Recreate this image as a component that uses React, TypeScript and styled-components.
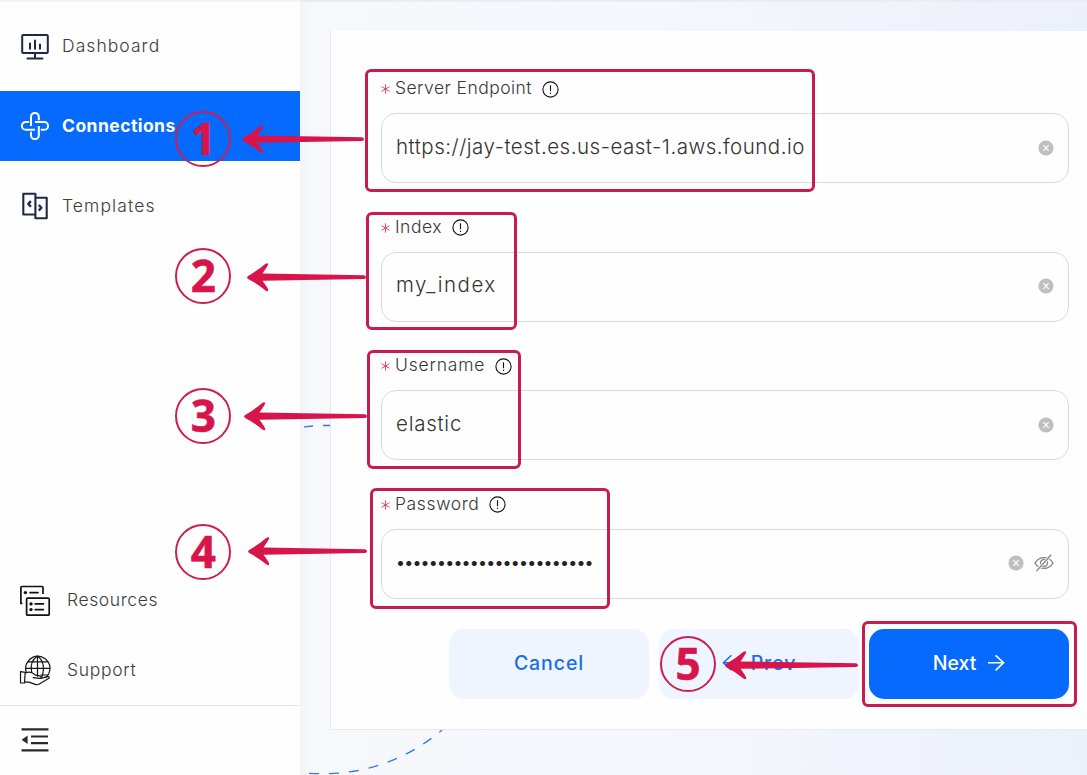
import React from "react";
import styled, { createGlobalStyle } from "styled-components";

const GlobalStyle = createGlobalStyle`
  *, *::before, *::after { box-sizing: border-box; }
  html, body { margin: 0; padding: 0; }
  body {
    width: 1087px;
    height: 775px;
    overflow: hidden;
    background: #fff;
    font-family: Inter, "Liberation Sans", sans-serif;
    color: #3d3d3d;
  }
`;

const Page = styled.div`
  position: relative;
  display: flex;
  width: 1087px;
  height: 775px;
  overflow: hidden;
`;

const Sidebar = styled.aside`
  width: 300px;
  flex: none;
  display: flex;
  flex-direction: column;
  background: #fefefe;
  border-top: 2px solid #f3f3f4;
`;

const NavGroup = styled.nav`
  display: flex;
  flex-direction: column;
  gap: 10px;
  padding-top: 9px;
`;

const FooterGroup = styled.nav`
  display: flex;
  flex-direction: column;
  margin-top: auto;
`;

const NavItem = styled.a<{ $active?: boolean; $left?: number; $gap?: number }>`
  display: flex;
  align-items: center;
  height: 70px;
  padding-left: ${(p) => p.$left ?? 21}px;
  gap: ${(p) => p.$gap ?? 13}px;
  background: ${(p) => (p.$active ? "#066aff" : "transparent")};
  color: ${(p) => (p.$active ? "#fff" : "#3c3c3c")};

  svg { flex: none; }
`;

const NavText = styled.span<{ $spacing: number; $bold?: boolean }>`
  font-size: 17.5px;
  line-height: 24px;
  font-weight: ${(p) => (p.$bold ? 650 : 300)};
  letter-spacing: ${(p) => p.$spacing}px;
  white-space: nowrap;
`;

const CollapseBar = styled.div`
  height: 70px;
  display: flex;
  align-items: center;
  padding: 0 0 2px 21px;
  border-top: 1px solid #e6e6e6;
`;

const Main = styled.main`
  position: relative;
  flex: 1;
  min-width: 0;
  padding: 29px 0 0 30px;
  border-top: 2px solid #eaecef;
  background: linear-gradient(90deg, #f3f4f7 0, #f6f8fb 14px, #f4f7fc 45%, #ecf0fb 100%);
`;

const Backdrop = styled.svg`
  position: absolute;
  left: 0;
  top: -2px;
`;

const Card = styled.section`
  position: relative;
  height: 699px;
  padding: 45px 18px 0 50px;
  background: #fefefe;
  border-left: 1px solid #e4e8ee;
  border-bottom: 1px solid #e6e9f0;
`;

const Field = styled.div`
  height: 138.67px;
`;

const Label = styled.label`
  display: flex;
  align-items: center;
  height: 24px;
  color: #383838;
`;

const Star = styled.svg`
  margin: 2px 5px 0 0;
  flex: none;
`;

const LabelText = styled.span<{ $spacing: number }>`
  font-size: 17.5px;
  line-height: 24px;
  font-weight: 300;
  letter-spacing: ${(p) => p.$spacing}px;
  white-space: nowrap;
`;

const InfoSvg = styled.svg`
  margin: 2px 0 0 10px;
  flex: none;
`;

const InputBox = styled.div`
  display: flex;
  align-items: center;
  justify-content: space-between;
  height: 70px;
  margin-top: 13px;
  padding: 0 14px 1px;
  border: 1px solid #d8dadb;
  border-radius: 15px;
`;

const Value = styled.span<{ $spacing: number; $dots?: boolean }>`
  font-size: ${(p) => (p.$dots ? 16 : 20.5)}px;
  line-height: 30px;
  margin-bottom: 2px;
  font-weight: ${(p) => (p.$dots ? 400 : 300)};
  letter-spacing: ${(p) => p.$spacing}px;
  color: ${(p) => (p.$dots ? "#222" : "#333")};
  white-space: nowrap;
`;

const Suffix = styled.span`
  display: flex;
  align-items: center;
  gap: 10px;
`;

const Actions = styled.div`
  display: flex;
  justify-content: flex-end;
  gap: 10px;
  margin-top: -2px;
`;

const Button = styled.button<{ $primary?: boolean }>`
  display: flex;
  align-items: center;
  justify-content: center;
  gap: 11px;
  width: 200px;
  height: 70px;
  padding: 0 0 2px;
  border: 0;
  border-radius: 15px;
  font: 500 19.5px/28px Inter, "Liberation Sans", sans-serif;
  letter-spacing: ${(p) => (p.$primary ? 0 : 0.9)}px;
  background: ${(p) => (p.$primary ? "#066aff" : "#eef5fe")};
  color: ${(p) => (p.$primary ? "#fff" : "#176fe8")};

  svg { margin-top: 2px; }
`;

const Annotations = styled.div`
  position: absolute;
  inset: 0;
  pointer-events: none;
`;

const Frame = styled.div<{ $x: number; $y: number; $w: number; $h: number }>`
  position: absolute;
  left: ${(p) => p.$x}px;
  top: ${(p) => p.$y}px;
  width: ${(p) => p.$w}px;
  height: ${(p) => p.$h}px;
  border: 3px solid #c61c4f;
  border-radius: 6px;
`;

const Step = styled.div<{ $x: number; $y: number }>`
  position: absolute;
  left: ${(p) => p.$x - 28}px;
  top: ${(p) => p.$y - 28}px;
  width: 56px;
  height: 56px;
  border: 2px solid #c9204f;
  border-radius: 50%;
  display: flex;
  align-items: center;
  justify-content: center;
  padding-bottom: 2px;
  font: 700 44px/50px "Open Sans", "Noto Sans", sans-serif;
  -webkit-text-stroke: 0.6px #d8154a;
  color: #d8154a;
`;

const ArrowSvg = styled.svg<{ $x: number; $y: number }>`
  position: absolute;
  left: ${(p) => p.$x}px;
  top: ${(p) => p.$y - 16}px;
`;

const Arrow = ({ x, y, end }: { x: number; y: number; end: number }) => {
  const w = end - x;
  return (
    <ArrowSvg $x={x} $y={y} width={w} height={32} viewBox={`0 0 ${w} 32`}>
      <path
        d={`M0 16.4 L1 15 Q10 10 18.5 2.7 Q20.5 1.6 21.3 3 Q21.6 4 15.5 12.4 L${w - 2} 14.2 Q${w} 14.5 ${w} 16.2 Q${w} 17.8 ${w - 2} 18 L15.5 19.8 Q21.6 28 21.3 29.4 Q20.4 30.8 18.5 29.6 Q10 22.5 1 18 Z`}
        fill="#d8154a"
      />
    </ArrowSvg>
  );
};

const DashboardIcon = () => (
  <svg width="28" height="28" viewBox="0 0 28 28" fill="none" stroke="#1c2a47" strokeWidth="2" strokeLinecap="round" strokeLinejoin="round">
    <rect x="1.2" y="3" width="25.6" height="18" rx="1" />
    <path d="M14 21v4.5M6.5 26.6h15" />
    <path d="M9 11.5v5.2M14 8.5v8.2M19 12.5v4.2" />
  </svg>
);

const ConnectionsIcon = () => (
  <svg width="28" height="28" viewBox="0 0 28 28" fill="none" stroke="#fff" strokeWidth="2" strokeLinejoin="round">
    <path d="M14 17.8H4.8a3.9 3.9 0 0 1 0-7.8h3.4" />
    <path d="M10 14V4.8a3.9 3.9 0 0 1 7.8 0v3.4" />
    <path d="M14 10h9.2a3.9 3.9 0 0 1 0 7.8h-3.4" />
    <path d="M17.8 14v9.2a3.9 3.9 0 0 1-7.8 0v-3.4" />
  </svg>
);

const TemplatesIcon = () => (
  <svg width="28" height="28" viewBox="0 0 28 28" fill="none" stroke="#1c2a47" strokeWidth="2.1" strokeLinejoin="round">
    <path d="M14.4 22.5H2.3V1.8h12.1v24.5h11.3V5.7H14.4" />
    <path d="M9.9 9.1 7.3 11.9l2.6 2.8M17.8 13l2.6 2.8-2.6 2.8" strokeWidth="2.3" />
  </svg>
);

const ResourcesIcon = () => (
  <svg width="32" height="32" viewBox="0 0 32 32" fill="none" stroke="#111" strokeWidth="1.7" strokeLinejoin="round">
    <path d="M3.4 19.5H1.9V3.5a1 1 0 0 1 1-1H23a1 1 0 0 1 1 1V10" />
    <rect x="7.6" y="14.2" width="22.6" height="17" rx="1" />
    <path d="M11 8.6h8M16.2 19.9h8.2M16.2 25.6h8.2" strokeLinecap="round" />
    <g fill="#111" stroke="none">
      <circle cx="6.4" cy="8.6" r="1.7" />
      <circle cx="12" cy="19.9" r="1.7" />
      <circle cx="12" cy="25.6" r="1.7" />
    </g>
  </svg>
);

const SupportIcon = () => (
  <svg width="32" height="32" viewBox="0 0 32 32" fill="none" stroke="#151515" strokeWidth="1.2" strokeLinejoin="round" strokeLinecap="round">
    <g transform="translate(0 .8)">
      <path d="M7.2 17.2A12.2 12.2 0 1 1 27 22.6" />
      <path d="M18.5 1.4v20M6.5 13.6h24M8.6 7h19.8M22 20.2h6.5" />
      <path d="M12.7 17.5C11 10 13.2 4.5 18.5 1.4c5.6 3.6 7.6 11.5 4.4 20.6" />
      <path d="M1.5 16.8l4.7.8-.7 10.6-4-.2zM6 18.5c4-2 7-1.3 10 1.5l5.5 1.4c1.4.6.8 2.3-.8 2.2l-6.5-.8M21.8 23.6l6.7-1.8c1.7-.3 2.4 1.2 1 2l-9.2 5.5c-1.4.8-2.8.8-4.1.3L10 27.3l-4.4-.2" />
    </g>
  </svg>
);

const CollapseIcon = () => (
  <svg width="28" height="26" viewBox="0 0 28 26" fill="#292929">
    <path d="M0.5 1.2h27v2.3h-27zM10 8.4h17v2.1H10zM10 15.1h17v2.1H10zM0.5 22.3h27v2.3h-27zM.6 12.8 6.6 8.6v8.4z" />
  </svg>
);

const Required = () => (
  <Star width="9" height="10" viewBox="0 0 9 10" stroke="#f4425d" strokeWidth="1" strokeLinecap="round">
    <path d="M4.5.8v8.4M.9 2.9l7.2 4.2M8.1 2.9.9 7.1" />
  </Star>
);

const Info = () => (
  <InfoSvg width="17" height="17" viewBox="0 0 17 17" fill="none" stroke="#111" strokeWidth="1.1">
    <circle cx="8.5" cy="8.5" r="7.6" />
    <path d="M8.5 4.2v6M8.5 11.8v1.3" />
  </InfoSvg>
);

const Clear = () => (
  <svg width="16" height="16" viewBox="0 0 16 16">
    <circle cx="8" cy="8" r="7.6" fill="#bfbfbf" />
    <path d="M5.4 5.2l5.2 5.6M10.6 5.2l-5.2 5.6" stroke="#fff" strokeWidth="1.2" />
  </svg>
);

const EyeOff = () => (
  <svg width="20" height="18" viewBox="0 0 20 18" fill="none" stroke="#858585" strokeWidth="1.4">
    <path d="M1 9C5.2 1.8 14.8 1.8 19 9 14.8 16.2 5.2 16.2 1 9z" />
    <circle cx="10" cy="9" r="3.5" />
    <path d="M2.4 17.1 17.2.8" stroke="#fff" strokeWidth="3" />
    <path d="M2.4 17.1 17.2.8" />
  </svg>
);

const NextArrow = () => (
  <svg width="18" height="18" viewBox="0 0 18 18" fill="none" stroke="currentColor" strokeWidth="1.6">
    <path d="M1 7.7h15.7M8.6.3l8 7.4-8 7.6" />
  </svg>
);

const PrevArrow = () => (
  <svg width="18" height="18" viewBox="0 0 18 18" fill="none" stroke="currentColor" strokeWidth="1.5">
    <path d="M17 7.7H1.3M9.4.3l-8 7.4 8 7.6" />
  </svg>
);

const fields = [
  { label: "Server Endpoint", ls: 0.44, value: "https://jay-test.es.us-east-1.aws.found.io", vs: 0.5 },
  { label: "Index", ls: 0.5, value: "my_index", vs: 1.5 },
  { label: "Username", ls: 0.8, value: "elastic", vs: 0.75 },
  { label: "Password", ls: 0.62, value: "•".repeat(24), vs: -0.8, secret: true },
];

export default function App() {
  return (
    <>
      <GlobalStyle />
      <Page>
        <Sidebar>
          <NavGroup>
            <NavItem><DashboardIcon /><NavText $spacing={1.05}>Dashboard</NavText></NavItem>
            <NavItem $active><ConnectionsIcon /><NavText $bold $spacing={0.45}>Connections</NavText></NavItem>
            <NavItem><TemplatesIcon /><NavText $spacing={1.1}>Templates</NavText></NavItem>
          </NavGroup>
          <FooterGroup>
            <NavItem $left={19} $gap={16}><ResourcesIcon /><NavText $spacing={0.6}>Resources</NavText></NavItem>
            <NavItem $left={19} $gap={16}><SupportIcon /><NavText $spacing={0.7}>Support</NavText></NavItem>
          </FooterGroup>
          <CollapseBar><CollapseIcon /></CollapseBar>
        </Sidebar>
        <Main>
          <Backdrop width="787" height="775" viewBox="0 0 787 775" fill="none" stroke="#2b7be8" strokeWidth="1.3">
            <path d="M4 426.8 L13 426M23 425.5H30" />
            <path d="M9 773.3Q85 778 142 730" strokeDasharray="10 10" />
          </Backdrop>
          <Card>
            {fields.map((f) => (
              <Field key={f.label}>
                <Label>
                  <Required />
                  <LabelText $spacing={f.ls}>{f.label}</LabelText>
                  <Info />
                </Label>
                <InputBox>
                  <Value $spacing={f.vs} $dots={f.secret}>{f.value}</Value>
                  <Suffix><Clear />{f.secret && <EyeOff />}</Suffix>
                </InputBox>
              </Field>
            ))}
            <Actions>
              <Button>Cancel</Button>
              <Button><PrevArrow />Prev</Button>
              <Button $primary>Next<NextArrow /></Button>
            </Actions>
          </Card>
        </Main>
        <Annotations>
          <Frame $x={365} $y={69} $w={450} $h={123} />
          <Frame $x={366} $y={212} $w={151} $h={118} />
          <Frame $x={367} $y={350} $w={154} $h={119} />
          <Frame $x={370} $y={488} $w={240} $h={121} />
          <Frame $x={862} $y={621} $w={215} $h={86} />
          <Step $x={203.3} $y={139}>1</Step>
          <Step $x={203.3} $y={276}>2</Step>
          <Step $x={203.3} $y={416}>3</Step>
          <Step $x={203.3} $y={552}>4</Step>
          <Step $x={688} $y={664}>5</Step>
          <Arrow x={242} y={139} end={364} />
          <Arrow x={247} y={276.5} end={366} />
          <Arrow x={244} y={415.5} end={367} />
          <Arrow x={248} y={550.5} end={367} />
          <Arrow x={725} y={664.5} end={858} />
        </Annotations>
      </Page>
    </>
  );
}
